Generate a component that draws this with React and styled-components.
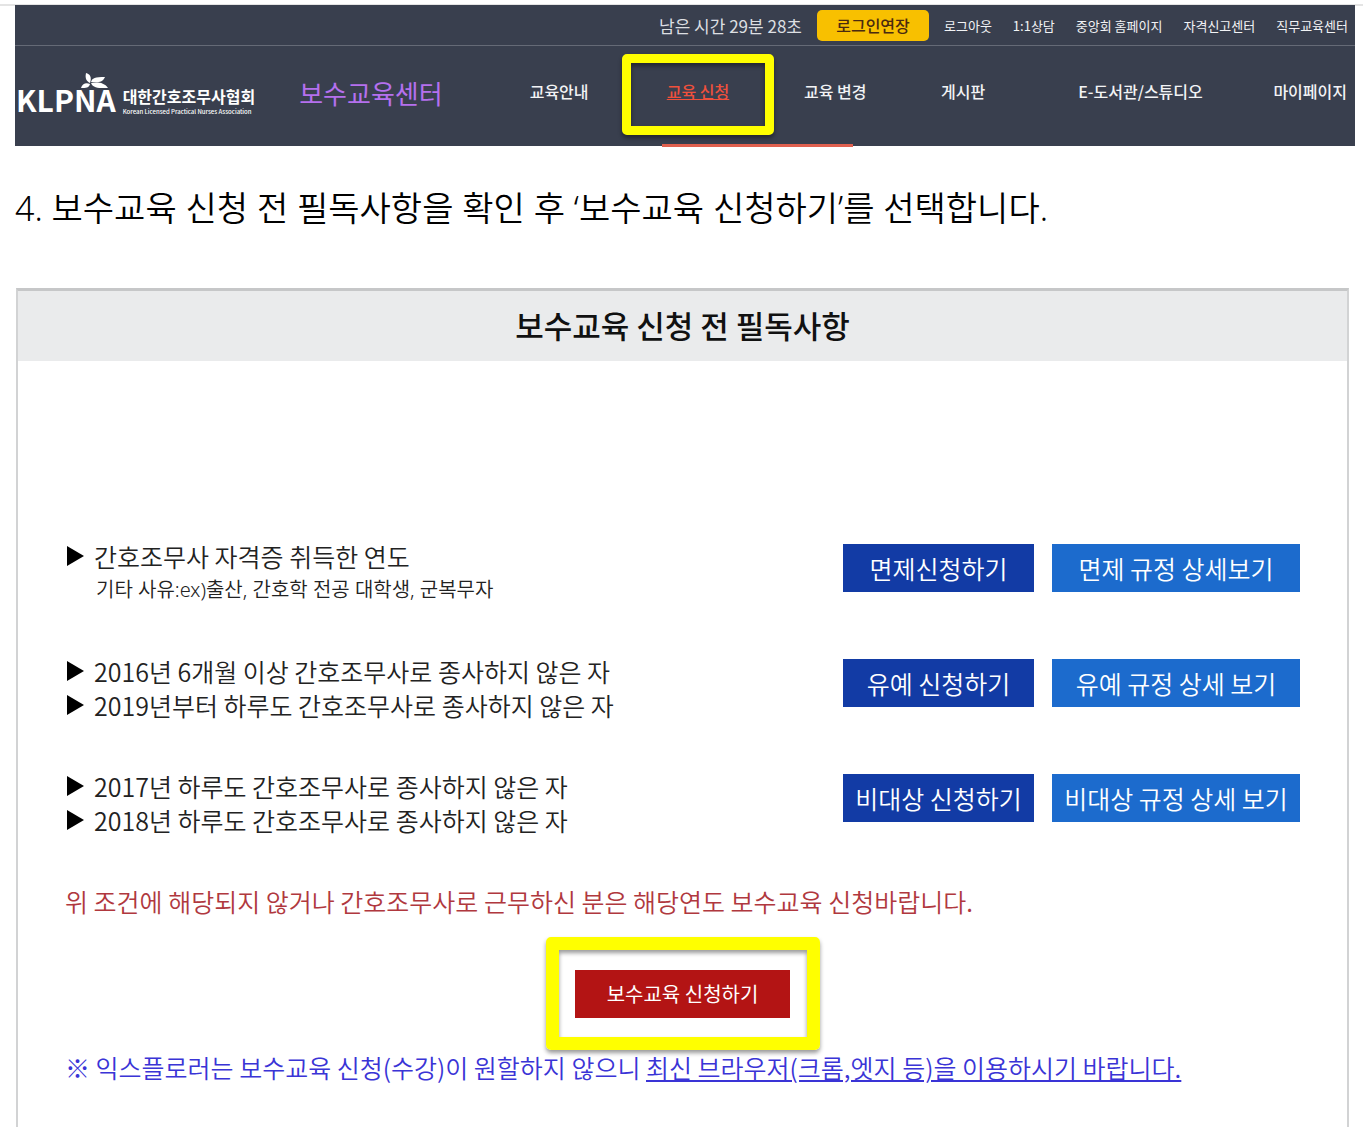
import styled, { createGlobalStyle, css } from "styled-components";

const topLinks = ["로그아웃", "1:1상담", "중앙회 홈페이지", "자격신고센터", "직무교육센터"];

const menus = ["교육안내", "교육 신청", "교육 변경", "게시판", "E-도서관/스튜디오", "마이페이지"];

const conditions = [
    {
        lines: ["간호조무사 자격증 취득한 연도"],
        note: "기타 사유:ex)출산, 간호학 전공 대학생, 군복무자",
        apply: "면제신청하기",
        detail: "면제 규정 상세보기",
    },
    {
        lines: ["2016년 6개월 이상 간호조무사로 종사하지 않은 자", "2019년부터 하루도 간호조무사로 종사하지 않은 자"],
        apply: "유예 신청하기",
        detail: "유예 규정 상세 보기",
    },
    {
        lines: ["2017년 하루도 간호조무사로 종사하지 않은 자", "2018년 하루도 간호조무사로 종사하지 않은 자"],
        apply: "비대상 신청하기",
        detail: "비대상 규정 상세 보기",
    },
];

const Logo = () => {
    return (
        <LogoLink href="#">
            <LogoMark>
                KLPNA
                <Leaf viewBox="0 0 28 16" aria-hidden="true">
                    <path d="M5 0C9 1 11 4 9 10C5 8 4 5 5 0Z" />
                    <path d="M10 9C11 5 14 4 24 4C22 9 17 10 10 9Z" />
                    <path d="M0 15C1 11 5 9 9 11C8 15 5 15 0 15Z" />
                    <path d="M10 10C16 9 23 9 27 15C21 15 12 16 10 10Z" />
                </Leaf>
            </LogoMark>
            <LogoName>
                대한간호조무사협회
                <small>Korean Licensed Practical Nurses Association</small>
            </LogoName>
        </LogoLink>
    );
};

const Header = () => {
    return (
        <HeaderWrapper>
            <TopBar>
                <Timer>남은 시간 29분 28초</Timer>
                <ExtendButton type="button">로그인연장</ExtendButton>
                <TopLinks>
                    {topLinks.map((text) => (
                        <a href="#" key={text}>{text}</a>
                    ))}
                </TopLinks>
            </TopBar>
            <MainBar>
                <Logo />
                <CenterName>보수교육센터</CenterName>
                <Nav>
                    {menus.map((menu) => {
                        const active = menu === "교육 신청";
                        return (
                            <MenuItem key={menu} $active={active}>
                                <a href="#">{menu}</a>
                                {active && <MenuFrame />}
                            </MenuItem>
                        );
                    })}
                </Nav>
            </MainBar>
        </HeaderWrapper>
    );
};

const App = () => {
    return (
        <>
            <GlobalStyle />
            <Page>
                <Header />
                <StepTitle>4. 보수교육 신청 전 필독사항을 확인 후 ‘보수교육 신청하기’를 선택합니다.</StepTitle>
                <Panel>
                    <PanelTitle>보수교육 신청 전 필독사항</PanelTitle>
                    <PanelBody>
                        {conditions.map(({ lines, note, apply, detail }) => (
                            <Condition key={apply}>
                                <div>
                                    <ConditionList>
                                        {lines.map((line) => (
                                            <li key={line}>{line}</li>
                                        ))}
                                    </ConditionList>
                                    {note && <Note>{note}</Note>}
                                </div>
                                <Buttons>
                                    <Button type="button">{apply}</Button>
                                    <Button type="button" $theme="detail">{detail}</Button>
                                </Buttons>
                            </Condition>
                        ))}
                        <Message>위 조건에 해당되지 않거나 간호조무사로 근무하신 분은 해당연도 보수교육 신청바랍니다.</Message>
                        <SubmitFrame>
                            <Button type="button" $theme="submit">보수교육 신청하기</Button>
                        </SubmitFrame>
                        <Message $theme="notice">
                            ※ 익스플로러는 보수교육 신청(수강)이 원할하지 않으니{" "}
                            <a href="#">최신 브라우저(크롬,엣지 등)을 이용하시기 바랍니다.</a>
                        </Message>
                    </PanelBody>
                </Panel>
            </Page>
        </>
    );
};

export default App;

const GlobalStyle = createGlobalStyle`
    * {
        box-sizing: border-box;
    }
    body {
        margin: 0;
        background-color: #ffffff;
        font-family: "Noto Sans CJK KR", "Noto Sans", sans-serif;
        color: #222222;
    }
    a {
        color: inherit;
        text-decoration: none;
    }
    button {
        border: none;
        padding: 0;
        font-family: inherit;
        cursor: pointer;
    }
    h1, h2, p, ul {
        margin: 0;
        padding: 0;
    }
`;

/* yellow marker box laid around the thing to click */
const frame = css`
    border: 9px solid #ffff00;
    border-radius: 5px;
    box-shadow: 0 3px 4px rgba(0, 0, 0, 0.4), inset 0 3px 4px rgba(0, 0, 0, 0.4);
`;

const Page = styled.div`
    display: flex;
    flex-direction: column;
    min-height: 100vh;
    padding: 0 8px 0 15px;
    background: linear-gradient(#e4e4e4, #e4e4e4) 0 4px / 100% 2px no-repeat;
`;

const HeaderWrapper = styled.header`
    margin-top: 5px;
    background-color: #393f4e;
    color: #f2f3f5;
`;

const TopBar = styled.div`
    display: flex;
    align-items: center;
    justify-content: flex-end;
    gap: 15px;
    height: 41px;
    padding-right: 7px;
    border-bottom: 1px solid #656a76;
`;

const Timer = styled.span`
    font-size: 17px;
    color: #dddfe2;
`;

const ExtendButton = styled.button`
    width: 112px;
    height: 31px;
    border-radius: 5px;
    background-color: #f8c000;
    color: #4a2a10;
    font-size: 16px;
    font-weight: 500;
`;

const TopLinks = styled.div`
    display: flex;
    gap: 21px;
    font-size: 13px;
`;

const MainBar = styled.div`
    display: flex;
    height: 100px;
    padding: 0 8px 0 1px;
    line-height: 90px;
`;

const LogoLink = styled.a`
    display: flex;
    gap: 7px;
    color: #ffffff;
`;

const LogoMark = styled.span`
    position: relative;
    padding-top: 8px;
    font-size: 30px;
    font-weight: 700;
`;

const Leaf = styled.svg`
    position: absolute;
    top: 27px;
    left: 65px;
    width: 28px;
    height: 16px;
    fill: #ffffff;
`;

const LogoName = styled.strong`
    padding-top: 38px;
    font-size: 16px;
    font-weight: 700;
    line-height: 24px;

    small {
        display: block;
        font-size: 6px;
        font-weight: 500;
        line-height: 8px;
    }
`;

const CenterName = styled.span`
    margin-left: 44px;
    font-size: 26px;
    line-height: 94px;
    color: #b570ee;
`;

const Nav = styled.nav`
    display: grid;
    grid-template-columns: repeat(4, 137fr) 195fr auto;
    flex: 1;
    margin-left: 87px;
    font-size: 16px;
    font-weight: 500;
`;

const MenuItem = styled.div`
    position: relative;
    white-space: nowrap;

    ${({ $active }) =>
        $active &&
        css`
            color: #f0503c;

            a {
                text-decoration: underline;
            }
            &::after {
                content: "";
                position: absolute;
                left: -5px;
                bottom: -1px;
                width: 191px;
                height: 3px;
                background-color: #e0604f;
            }
        `}
`;

const MenuFrame = styled.span`
    position: absolute;
    top: 8px;
    left: -45px;
    width: 152px;
    height: 81px;
    pointer-events: none;
    ${frame}
`;

const StepTitle = styled.h1`
    padding: 36px 0 54px;
    font-family: "Noto Sans", "Noto Sans CJK KR", sans-serif;
    font-size: 34px;
    font-weight: 350;
    line-height: 52px;
    color: #000000;
`;

const Panel = styled.section`
    flex: 1;
    margin: 0 6px 0 1px;
    border: 2px solid #d2d3d4;
    border-top: 3px solid #c6c7c8;
    border-bottom: none;
`;

const PanelTitle = styled.h2`
    padding-bottom: 2px;
    background-color: #eaebec;
    font-size: 31px;
    font-weight: 500;
    line-height: 68px;
    text-align: center;
    color: #111111;
`;

const PanelBody = styled.div`
    padding: 178px 47px 40px;
`;

const Condition = styled.div`
    display: flex;
    justify-content: space-between;
    margin-bottom: 47px;
`;

const ConditionList = styled.ul`
    list-style: none;
    font-size: 25px;
    font-weight: 350;
    line-height: 34px;

    li {
        display: flex;
        align-items: center;
    }
    li::before {
        content: "";
        margin: 0 10px 0 2px;
        border-left: 17px solid #000000;
        border-top: 10px solid transparent;
        border-bottom: 10px solid transparent;
    }
`;

const Note = styled.p`
    padding-left: 31px;
    font-family: "Noto Sans", "Noto Sans CJK KR", sans-serif;
    font-size: 20px;
    font-weight: 350;
    line-height: 34px;
`;

const Buttons = styled.div`
    display: flex;
    gap: 18px;
    padding-top: 5px;
`;

const Button = styled.button`
    width: 191px;
    height: 48px;
    background-color: #123ba5;
    color: #ffffff;
    font-size: 25px;
    font-weight: 350;

    ${({ $theme }) => {
        switch ($theme) {
            case "detail":
                return css`
                    width: 248px;
                    background-color: #1c6bcd;
                `;
            case "submit":
                return css`
                    width: 215px;
                    background-color: #b31414;
                    font-size: 20px;
                    font-weight: 400;
                `;
        }
    }}
`;

const Message = styled.p`
    font-size: 25px;
    font-weight: 350;
    line-height: 34px;
    color: ${({ $theme }) => ($theme === "notice" ? "#3a34d6" : "#b0383e")};

    a {
        text-decoration: underline;
    }
`;

const SubmitFrame = styled.div`
    display: flex;
    align-items: center;
    justify-content: center;
    width: 274px;
    height: 113px;
    margin: 19px auto 0;
    ${frame}
    border-width: 13px;
`;
